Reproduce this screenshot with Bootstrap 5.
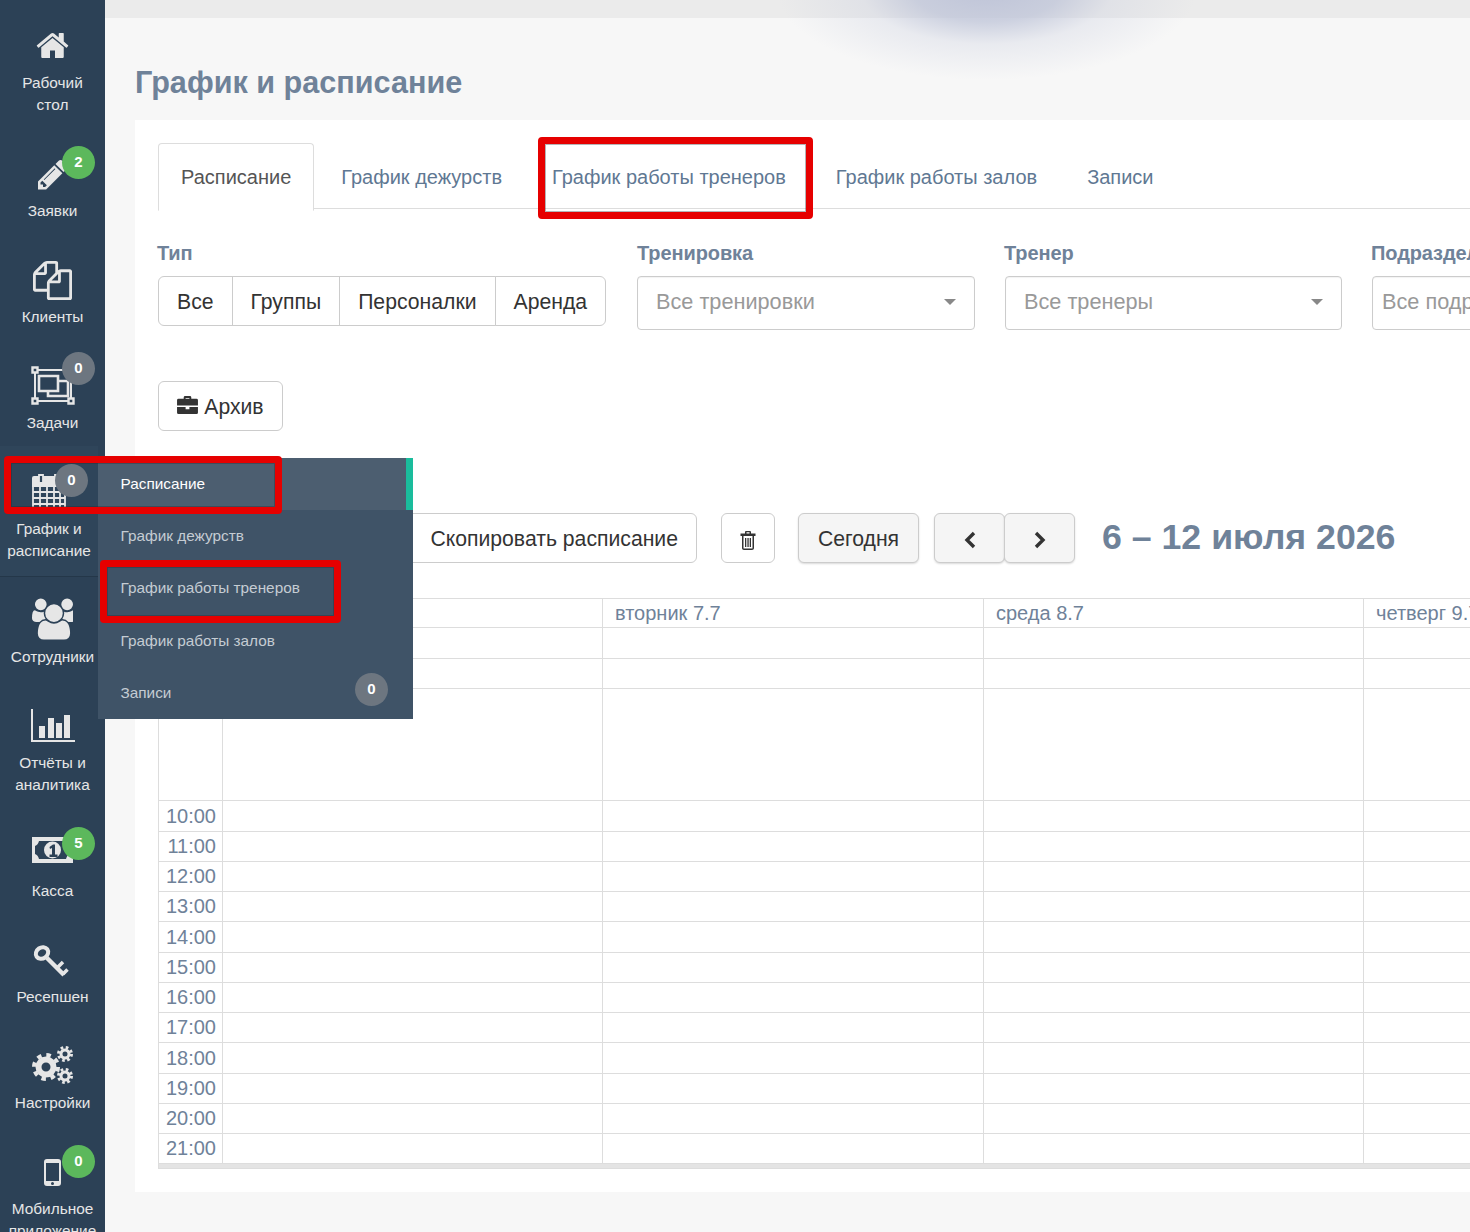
<!DOCTYPE html>
<html lang="ru">
<head>
  <meta charset="UTF-8" />
  <meta name="viewport" content="width=device-width, initial-scale=1" />
  <title>График и расписание</title>
  <link href="https://cdn.jsdelivr.net/npm/bootstrap@5.3.3/dist/css/bootstrap.min.css" rel="stylesheet" />
  <style>
    html, body { height: 1232px; overflow: hidden; }
    body { font-family: "Liberation Sans", Arial, sans-serif; background: #f7f7f7; color: #333; position: relative; }

    .side-bar { width: 105px; height: 1232px; background: #2c4156; flex: none; overflow: hidden; }
    .side-item { position: relative; height: 106px; padding-top: 72px; text-align: center; color: #e6e6e6; font-size: 15.4px; line-height: 22px; white-space: nowrap; }
    .side-item.two-line { height: 128px; }
    .side-item.current { width: 98px; height: 131px; margin-bottom: -3px; background: #2f455a; border-bottom: 1px solid #243749; }
    .side-item svg { position: absolute; fill: #e6e6e6; }
    .side-count { position: absolute; left: 62px; top: 18px; width: 33px; height: 33px; border-radius: 50%; color: #fff; font-weight: 700; font-size: 15px; line-height: 31px; text-align: center; }
    .count-green { background: #5cb85c; }
    .count-grey { background: #6d7680; }

    .main-area { flex: 1 1 auto; min-width: 0; height: 1232px; overflow: hidden; position: relative; }
    .top-strip { height: 18px; background: #ebebeb; }
    .top-glow { position: absolute; left: 672px; top: -100px; width: 420px; height: 180px; background: radial-gradient(closest-side, rgba(186,192,214,.9) 0%, rgba(190,196,216,.75) 35%, rgba(200,205,222,.3) 60%, rgba(200,205,222,0) 100%); }
    .page-title { font-size: 30.6px; font-weight: 700; color: #6f8299; line-height: 36px; margin: 46px 0 20px 30px; }
    .white-panel { position: relative; background: #fff; margin-left: 30px; height: 1072px; padding: 23px 0 0 23px; overflow: hidden; }

    .tabs-row { border-bottom: 1px solid #ddd; height: 66px; flex-wrap: nowrap; }
    .tabs-row .nav-link { font-size: 20px; line-height: 24px; padding: 21px 22px; color: #5f7893; margin-right: 4px; border-radius: 4px 4px 0 0; }
    .tabs-row .nav-link.active { color: #555; border-color: #ddd #ddd #fff; }
    .filter-row { margin-top: 32px; gap: 30px; }
    .filter-row > div { flex: none; }
    .filter-label { font-size: 20px; letter-spacing: -.1px; font-weight: 700; color: #6f8299; line-height: 24px; margin-bottom: 11px; white-space: nowrap; margin-left: -1px; }
    .type-group .btn { font-size: 21.2px; line-height: 26px; padding: 12px 18px 10px; color: #333; border-color: #ccc; background: #fff; }
    .fake-select { height: 54px; border: 1px solid #ccc; border-radius: 4px; padding: 0 18px 2px; font-size: 21.7px; color: #999; display: flex; align-items: center; justify-content: space-between; white-space: nowrap; overflow: hidden; box-shadow: inset 0 1px 1px rgba(0,0,0,.05); }
    .fake-select i { border-top: 6px solid #888; border-left: 6px solid transparent; border-right: 6px solid transparent; }
    .fake-select.open-end { padding: 9px 9px 0; align-items: flex-start; }

    .plain-btn { font-size: 21.2px; line-height: 26px; padding: 12px 18px 10px; color: #333; border-color: #ccc; background: #fff; white-space: nowrap; }
    .archive-btn { margin-top: 51px; width: 125px; padding-left: 0; padding-right: 0; }
    .archive-btn svg { vertical-align: -1px; }
    .tool-row { margin-top: 82px; height: 50px; padding-left: 239px; }
    .tool-row .btn { height: 50px; flex: none; }
    .grey-btn { background: #f5f5f5; box-shadow: 0 1px 2px rgba(0,0,0,.15); }
    .week-title { font-size: 35.7px; font-weight: 700; color: #6f8299; line-height: 46px; margin: 0 0 2px 27px; white-space: nowrap; }

    .week-table { table-layout: fixed; width: 2724px; margin-top: 35px; border-collapse: collapse; color: #6f8299; }
    .week-table th, .week-table td { border: 1px solid #ddd; padding: 0; font-weight: 400; }
    .week-table thead th { font-size: 20px; height: 29px; padding-left: 12px; line-height: 27px; white-space: nowrap; }
    .week-table td.hour { font-size: 20px; text-align: right; padding: 0 6px 1px 0; line-height: 26px; }
    .table-end { width: 2724px; height: 5px; background: #e4e4e4; border: 1px solid #ddd; border-top: 0; }

    .fly-menu { position: absolute; left: 98px; top: 458px; width: 315px; height: 261px; background: #3f5367; padding: 0; margin: 0; list-style: none; z-index: 5; }
    .fly-menu li { position: relative; height: 52.2px; padding: 15px 0 0 22.500px; font-size: 15.35px; line-height: 22px; color: #c5ccd3; }
    .fly-menu li.on { background: #4c5e70; color: #fff; border-right: 7px solid #1abc9c; }
    .fly-menu .side-count { left: 257px; top: 6px; }
    .mark-box { position: absolute; border: 7px solid #e60000; border-radius: 4px; z-index: 8; box-shadow: inset 0 0 0 1px rgba(40,40,50,.35); }
  </style>
</head>
<body>
  <div class="d-flex">
    <aside class="side-bar">
      <div class="side-item two-line">
        <svg style="left:35px;top:28px" width="35" height="35" viewBox="0 0 1792 1792"><path d="M1472 992v480q0 26-19 45t-45 19h-384v-384h-256v384h-384q-26 0-45-19t-19-45v-480q0-1 .5-3t.5-3l575-474 575 474q1 2 1 6zm223-69l-62 74q-8 9-21 11h-3q-13 0-21-7l-692-577-692 577q-12 8-24 7-13-2-21-11l-62-74q-8-10-7-23.500t11-21.500l719-599q32-26 76-26t76 26l244 204v-195q0-14 9-23t23-9h192q14 0 23 9t9 23v408l219 182q10 8 11 21.500t-7 23.500z"/></svg>
        Рабочий<br>стол
      </div>
      <div class="side-item">
        <svg style="left:35px;top:29px" width="31" height="35" viewBox="0 0 1536 1792"><path d="M491 1536l91-91-235-235-91 91v107h128v128h107zm523-928q0-22-22-22-10 0-17 7l-542 542q-7 7-7 17 0 22 22 22 10 0 17-7l542-542q7-7 7-17zm-54-192l416 416-832 832h-416v-416zm683 96q0 53-37 90l-166 166-416-416 166-165q36-38 90-38 53 0 91 38l235 234q37 39 37 91z"/></svg>
        Заявки
        <span class="side-count count-green">2</span>
      </div>
      <div class="side-item">
        <svg style="left:33px;top:27px" width="39" height="39" viewBox="0 0 1792 1792"><path d="M1696 384q40 0 68 28t28 68v1216q0 40-28 68t-68 28h-960q-40 0-68-28t-28-68v-288h-544q-40 0-68-28t-28-68v-672q0-40 20-88t48-76l408-408q28-28 76-48t88-20h416q40 0 68 28t28 68v328q68-40 128-40h416zm-544 213l-299 299h299v-299zm-640-384l-299 299h299v-299zm196 647l316-316v-416h-384v416q0 40-28 68t-68 28h-416v640h512v-256q0-40 20-88t48-76zm956 804v-1152h-384v416q0 40-28 68t-68 28h-416v640h896z"/></svg>
        Клиенты
      </div>
      <div class="side-item">
        <svg style="left:31px;top:26px" width="44" height="39" viewBox="0 0 44 39"><g fill="none" stroke="#e6e6e6" stroke-width="2"><path d="M4 4h36v31H4z"/><path d="M8 10h19v15H8z" stroke-width="2.600"/><path d="M27 15h10v15H17v-5" stroke-width="2.600"/></g><g fill="#2c4156" stroke="#e6e6e6" stroke-width="2.400"><path d="M1.500 1.500h5v5h-5zM37.500 1.500h5v5h-5zM1.500 32.500h5v5h-5zM37.500 32.500h5v5h-5z"/></g></svg>
        Задачи
        <span class="side-count count-grey" style="top:12px">0</span>
      </div>
      <div class="side-item current">
        <svg style="left:31px;top:27px" width="36" height="40" viewBox="0 0 36 40"><path d="M3 3h32v11H1V5q0-2 2-2z" fill="#e6e6e6"/><path d="M2 13v26h32V13M2 19h32M2 25h32M2 31h32M9 13v26M16 13v26M23 13v26M29 13v26" fill="none" stroke="#e6e6e6" stroke-width="1.800"/><path d="M8 2h4v8H8zM24 2h4v8h-4z" fill="#2f455a" stroke="#e6e6e6" stroke-width="1.800"/></svg>
        График и<br>расписание
        <span class="side-count count-grey" style="left:55px">0</span>
      </div>
      <div class="side-item">
        <svg style="left:32px;top:24px" width="41" height="42" viewBox="0 0 1792 1792"><path d="M593 896q-162 5-265 128h-134q-82 0-138-40.500t-56-118.500q0-353 124-353 6 0 43.500 21t97.500 42.500 119 21.500q67 0 133-23-5 37-5 66 0 139 81 256zm1071 637q0 120-73 189.500t-194 69.500h-874q-121 0-194-69.500t-73-189.500q0-53 3.500-103.500t14-109 26.500-108.500 43-97.500 62-81 85.500-53.500 111.500-20q10 0 43 21.500t73 48 107 48 135 21.500 135-21.500 107-48 73-48 43-21.500q61 0 111.500 20t85.500 53.500 62 81 43 97.500 26.500 108.500 14 109 3.500 103.500zm-1024-1277q0 106-75 181t-181 75-181-75-75-181 75-181 181-75 181 75 75 181zm704 384q0 159-112.500 271.500t-271.500 112.500-271.500-112.500-112.500-271.500 112.500-271.500 271.500-112.500 271.500 112.500 112.500 271.500zm576 225q0 78-56 118.500t-138 40.500h-134q-103-123-265-128 81-117 81-256 0-29-5-66 66 23 133 23 59 0 119-21.500t97.500-42.500 43.500-21q124 0 124 353zm-128-609q0 106-75 181t-181 75-181-75-75-181 75-181 181-75 181 75 75 181z"/></svg>
        Сотрудники
      </div>
      <div class="side-item two-line">
        <svg style="left:30px;top:28px" width="45" height="35" viewBox="0 0 45 35"><path d="M1 1h2v31h42v2H1z"/><path d="M9 18h6v12H9zM18 10h6v20h-6zM26 15h6v15h-6zM34 7h6v23h-6z"/></svg>
        Отчёты и<br>аналитика
      </div>
      <div class="side-item">
        <svg style="left:32px;top:29px" width="41" height="26" viewBox="0 0 41 26"><path fill-rule="evenodd" d="M0 0h41v26H0zM7 4Q6 8 3 9v8q3 1 4 5h27q1-4 4-5V9q-3-1-4-5z"/><circle cx="20.500" cy="13" r="8.500"/><path d="M17.500 10l3.500-2.500h2v10h2.500V20h-8v-2.500H20V11l-2 1z" fill="#2c4156"/></svg>
        Касса
        <span class="side-count count-green" style="top:19px">5</span>
      </div>
      <div class="side-item">
        <svg style="left:33px;top:30px" width="36" height="34" viewBox="0 0 36 34"><g fill="none" stroke="#e6e6e6"><ellipse cx="9" cy="9" rx="6.500" ry="5.500" stroke-width="4" transform="rotate(-35 9 9)"/><path d="M14 14l17 17" stroke-width="4.500"/><path d="M24 24l6-6M30 30l4.500-4.500" stroke-width="3.500"/></g></svg>
        Ресепшен
      </div>
      <div class="side-item">
        <svg style="left:32px;top:26px" width="41" height="38" viewBox="0 0 41 38"><g fill="none" stroke="#e6e6e6"><circle cx="14" cy="21" r="7.500" stroke-width="6"/><circle cx="14" cy="21" r="12" stroke-width="4" stroke-dasharray="4.500 4.920"/><circle cx="33" cy="8" r="4" stroke-width="3"/><circle cx="33" cy="8" r="6.500" stroke-width="3" stroke-dasharray="2.600 2.500"/><circle cx="33" cy="30" r="4" stroke-width="3"/><circle cx="33" cy="30" r="6.500" stroke-width="3" stroke-dasharray="2.600 2.500"/></g></svg>
        Настройки
      </div>
      <div class="side-item two-line">
        <svg style="left:44px;top:33px" width="17" height="27" viewBox="0 0 17 27"><path fill-rule="evenodd" d="M3 0h11a3 3 0 0 1 3 3v21a3 3 0 0 1-3 3H3a3 3 0 0 1-3-3V3a3 3 0 0 1 3-3zM2 4v18h13V4zM8.500 23a1.500 1.500 0 1 0 0 3 1.500 1.500 0 0 0 0-3z"/></svg>
        Мобильное<br>приложение
        <span class="side-count count-green" style="top:19px">0</span>
      </div>
    </aside>

    <main class="main-area">
      <div class="top-strip"></div>
      <div class="top-glow"></div>
      <h1 class="page-title">График и расписание</h1>
      <div class="white-panel">
        <ul class="nav nav-tabs tabs-row">
          <li class="nav-item"><a class="nav-link active" href="#">Расписание</a></li>
          <li class="nav-item"><a class="nav-link" href="#">График дежурств</a></li>
          <li class="nav-item"><a class="nav-link" href="#">График работы тренеров</a></li>
          <li class="nav-item"><a class="nav-link" href="#">График работы залов</a></li>
          <li class="nav-item"><a class="nav-link" href="#">Записи</a></li>
        </ul>

        <div class="d-flex filter-row">
          <div style="width:449px">
            <div class="filter-label">Тип</div>
            <div class="btn-group type-group">
              <button class="btn">Все</button>
              <button class="btn">Группы</button>
              <button class="btn">Персоналки</button>
              <button class="btn">Аренда</button>
            </div>
          </div>
          <div style="width:338px">
            <div class="filter-label" style="margin-left:0">Тренировка</div>
            <div class="fake-select">Все тренировки <i></i></div>
          </div>
          <div style="width:337px">
            <div class="filter-label">Тренер</div>
            <div class="fake-select">Все тренеры <i></i></div>
          </div>
          <div style="width:338px">
            <div class="filter-label">Подразделение</div>
            <div class="fake-select open-end">Все подразделения</div>
          </div>
        </div>

        <button class="btn plain-btn archive-btn d-block">
          <svg width="21" height="19" viewBox="0 0 22 20"><path fill="#333" d="M7 3V1.500A1.500 1.500 0 0 1 8.500 0h5A1.500 1.500 0 0 1 15 1.500V3h5.500A1.500 1.500 0 0 1 22 4.500V10H0V4.500A1.500 1.500 0 0 1 1.500 3zM9 2v1h4V2zM0 11.500h9V14h4v-2.500h9v6a1.500 1.500 0 0 1-1.500 1.500h-19A1.500 1.500 0 0 1 0 17.500z"/></svg>
          Архив
        </button>

        <div class="d-flex align-items-center tool-row">
          <button class="btn plain-btn" style="width:300px;text-align:right">Скопировать расписание</button>
          <button class="btn plain-btn ms-4 px-0" style="width:54px">
            <svg width="16" height="19" viewBox="0 0 16 19"><path fill="#333" fill-rule="evenodd" d="M5 2.500V1.200C5 .5 5.500 0 6.200 0h3.600C10.500 0 11 .5 11 1.200v1.300h4.500V5H14v12c0 1.200-.8 2-2 2H4c-1.200 0-2-.8-2-2V5H.5V2.500zM6.500 1.300v1.200h3V1.300zM3.500 5v12c0 .4.200.6.500.6h8c.3 0 .5-.2.500-.6V5zM5 7h1.300v9H5zM7.400 7h1.300v9H7.400zM9.700 7H11v9H9.700z"/></svg>
          </button>
          <button class="btn plain-btn grey-btn" style="margin-left:23px;width:121px">Сегодня</button>
          <div class="d-flex" style="margin-left:15px">
            <button class="btn plain-btn grey-btn px-0" style="width:71px"><svg width="14" height="18" viewBox="0 0 14 18"><path d="M11 2L4 9l7 7" fill="none" stroke="#333" stroke-width="3.400"/></svg></button>
            <button class="btn plain-btn grey-btn px-0" style="width:71px;margin-left:-1px"><svg width="14" height="18" viewBox="0 0 14 18"><path d="M3 2l7 7-7 7" fill="none" stroke="#333" stroke-width="3.400"/></svg></button>
          </div>
          <h2 class="week-title">6 – 12 июля 2026</h2>
        </div>

        <table class="week-table" id="week"></table>
        <div class="table-end"></div>
      </div>
    </main>
  </div>

  <ul class="fly-menu">
    <li class="on">Расписание</li>
    <li>График дежурств</li>
    <li>График работы тренеров</li>
    <li>График работы залов</li>
    <li>Записи <span class="side-count count-grey">0</span></li>
  </ul>

  <div class="mark-box" style="left:4px;top:456px;width:278px;height:58px"></div>
  <div class="mark-box" style="left:100px;top:560px;width:241px;height:63px"></div>
  <div class="mark-box" style="left:538px;top:137px;width:275px;height:82px"></div>

  <script>
    // сетка недели: колонка времени + 7 дней
    const days = ["понедельник 6.7", "вторник 7.7", "среда 8.7", "четверг 9.7", "пятница 10.7", "суббота 11.7", "воскресенье 12.7"];
    const colWidths = [380, 381, 380, 380, 380, 380, 380];
    const cells = days.map(() => "<td></td>").join("");
    const row = (h, label) => `<tr style="height:${h}px"><td class="hour">${label}</td>${cells}</tr>`;
    let html = '<colgroup><col style="width:64px">' + colWidths.map((w) => `<col style="width:${w}px">`).join("") + "</colgroup>";
    html += "<thead><tr><th></th>" + days.map((d) => `<th>${d}</th>`).join("") + "</tr></thead><tbody>";
    html += row(31, "") + row(30, "") + row(112, "");
    const heights = [31, 30, 30, 30, 31, 30, 30, 30, 31, 30, 30, 30];
    heights.forEach((h, i) => { html += row(h, `${10 + i}:00`); });
    document.getElementById("week").innerHTML = html + "</tbody>";
  </script>
  <script src="https://cdn.jsdelivr.net/npm/bootstrap@5.3.3/dist/js/bootstrap.bundle.min.js"></script>
</body>
</html>
